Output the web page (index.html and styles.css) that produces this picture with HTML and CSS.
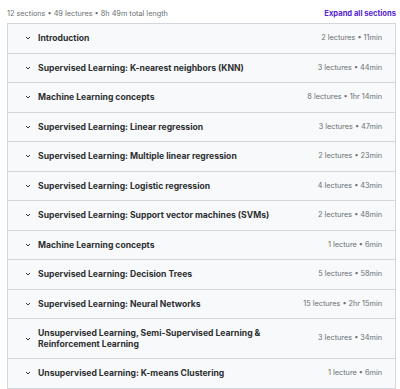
FILE: index.html
```html
<!DOCTYPE html>
<html lang="en">
<head>
    <meta charset="utf-8">
    <meta name="viewport" content="width=device-width, initial-scale=1.0">
    <title>Course content</title>
    <link rel="stylesheet" href="styles.css">
</head>
<body>
    <div class="curriculum">
        <!-- Riepilogo corso -->
        <div class="summary">
            <span class="summary-text">12 sections • 49 lectures • 8h 49m total length</span>
            <button class="expand">Expand all sections</button>
        </div>

        <!-- Sezioni -->
        <div class="sections">
            <div class="section">
                <span class="chevron"><svg viewBox="0 0 10 10"><path d="M2.5 3.8 L5 6.2 L7.5 3.8"/></svg></span>
                <span class="section-title">Introduction</span>
                <span class="section-meta">2 lectures • 11min</span>
            </div>
            <div class="section">
                <span class="chevron"><svg viewBox="0 0 10 10"><path d="M2.5 3.8 L5 6.2 L7.5 3.8"/></svg></span>
                <span class="section-title">Supervised Learning: K-nearest neighbors (KNN)</span>
                <span class="section-meta">3 lectures • 44min</span>
            </div>
            <div class="section">
                <span class="chevron"><svg viewBox="0 0 10 10"><path d="M2.5 3.8 L5 6.2 L7.5 3.8"/></svg></span>
                <span class="section-title">Machine Learning concepts</span>
                <span class="section-meta">8 lectures • 1hr 14min</span>
            </div>
            <div class="section">
                <span class="chevron"><svg viewBox="0 0 10 10"><path d="M2.5 3.8 L5 6.2 L7.5 3.8"/></svg></span>
                <span class="section-title">Supervised Learning: Linear regression</span>
                <span class="section-meta">3 lectures • 47min</span>
            </div>
            <div class="section">
                <span class="chevron"><svg viewBox="0 0 10 10"><path d="M2.5 3.8 L5 6.2 L7.5 3.8"/></svg></span>
                <span class="section-title">Supervised Learning: Multiple linear regression</span>
                <span class="section-meta">2 lectures • 23min</span>
            </div>
            <div class="section">
                <span class="chevron"><svg viewBox="0 0 10 10"><path d="M2.5 3.8 L5 6.2 L7.5 3.8"/></svg></span>
                <span class="section-title">Supervised Learning: Logistic regression</span>
                <span class="section-meta">4 lectures • 43min</span>
            </div>
            <div class="section">
                <span class="chevron"><svg viewBox="0 0 10 10"><path d="M2.5 3.8 L5 6.2 L7.5 3.8"/></svg></span>
                <span class="section-title">Supervised Learning: Support vector machines (SVMs)</span>
                <span class="section-meta">2 lectures • 48min</span>
            </div>
            <div class="section">
                <span class="chevron"><svg viewBox="0 0 10 10"><path d="M2.5 3.8 L5 6.2 L7.5 3.8"/></svg></span>
                <span class="section-title">Machine Learning concepts</span>
                <span class="section-meta">1 lecture • 6min</span>
            </div>
            <div class="section">
                <span class="chevron"><svg viewBox="0 0 10 10"><path d="M2.5 3.8 L5 6.2 L7.5 3.8"/></svg></span>
                <span class="section-title">Supervised Learning: Decision Trees</span>
                <span class="section-meta">5 lectures • 58min</span>
            </div>
            <div class="section">
                <span class="chevron"><svg viewBox="0 0 10 10"><path d="M2.5 3.8 L5 6.2 L7.5 3.8"/></svg></span>
                <span class="section-title">Supervised Learning: Neural Networks</span>
                <span class="section-meta">15 lectures • 2hr 15min</span>
            </div>
            <div class="section">
                <span class="chevron"><svg viewBox="0 0 10 10"><path d="M2.5 3.8 L5 6.2 L7.5 3.8"/></svg></span>
                <span class="section-title">Unsupervised Learning, Semi-Supervised Learning &amp; Reinforcement Learning</span>
                <span class="section-meta">3 lectures • 34min</span>
            </div>
            <div class="section">
                <span class="chevron"><svg viewBox="0 0 10 10"><path d="M2.5 3.8 L5 6.2 L7.5 3.8"/></svg></span>
                <span class="section-title">Unsupervised Learning: K-means Clustering</span>
                <span class="section-meta">1 lecture • 6min</span>
            </div>
        </div>
    </div>
</body>
</html>
```

FILE: styles.css
```css
body {
    margin: 0;
    padding: 0;
    font-family: Inter, "Noto Sans", sans-serif;
    background-color: #ffffff;
    color: #2d2f31;
}
.curriculum {
    padding: 0 4px 0 7px;
}
.summary {
    display: flex;
    justify-content: space-between;
    align-items: center;
    height: 20px;
    padding-top: 3px;
}
.summary-text {
    font-size: 7.3px;
    color: #6a6f73;
}
.expand {
    border: none;
    background: none;
    padding: 0;
    font-family: inherit;
    font-size: 7.6px;
    font-weight: 700;
    color: #5624d0;
    cursor: pointer;
}
.sections {
    border: 1px solid #d1d7dc;
    border-top: none;
}
.section {
    display: flex;
    align-items: center;
    gap: 6px;
    padding: 9px 13px 9px 16px;
    border-top: 1px solid #d1d7dc;
    background-color: #f7f9fa;
    line-height: 10.5px;
}
.chevron {
    width: 8px;
    height: 8px;
    flex-shrink: 0;
    display: flex;
}
.chevron svg {
    width: 8px;
    height: 8px;
    fill: none;
    stroke: #2d2f31;
    stroke-width: 1.2;
}
.section-title {
    flex: 1;
    font-size: 8.6px;
    font-weight: 700;
    padding-right: 40px;
}
.section-meta {
    font-size: 7.3px;
    color: #6a6f73;
    white-space: nowrap;
}
```
